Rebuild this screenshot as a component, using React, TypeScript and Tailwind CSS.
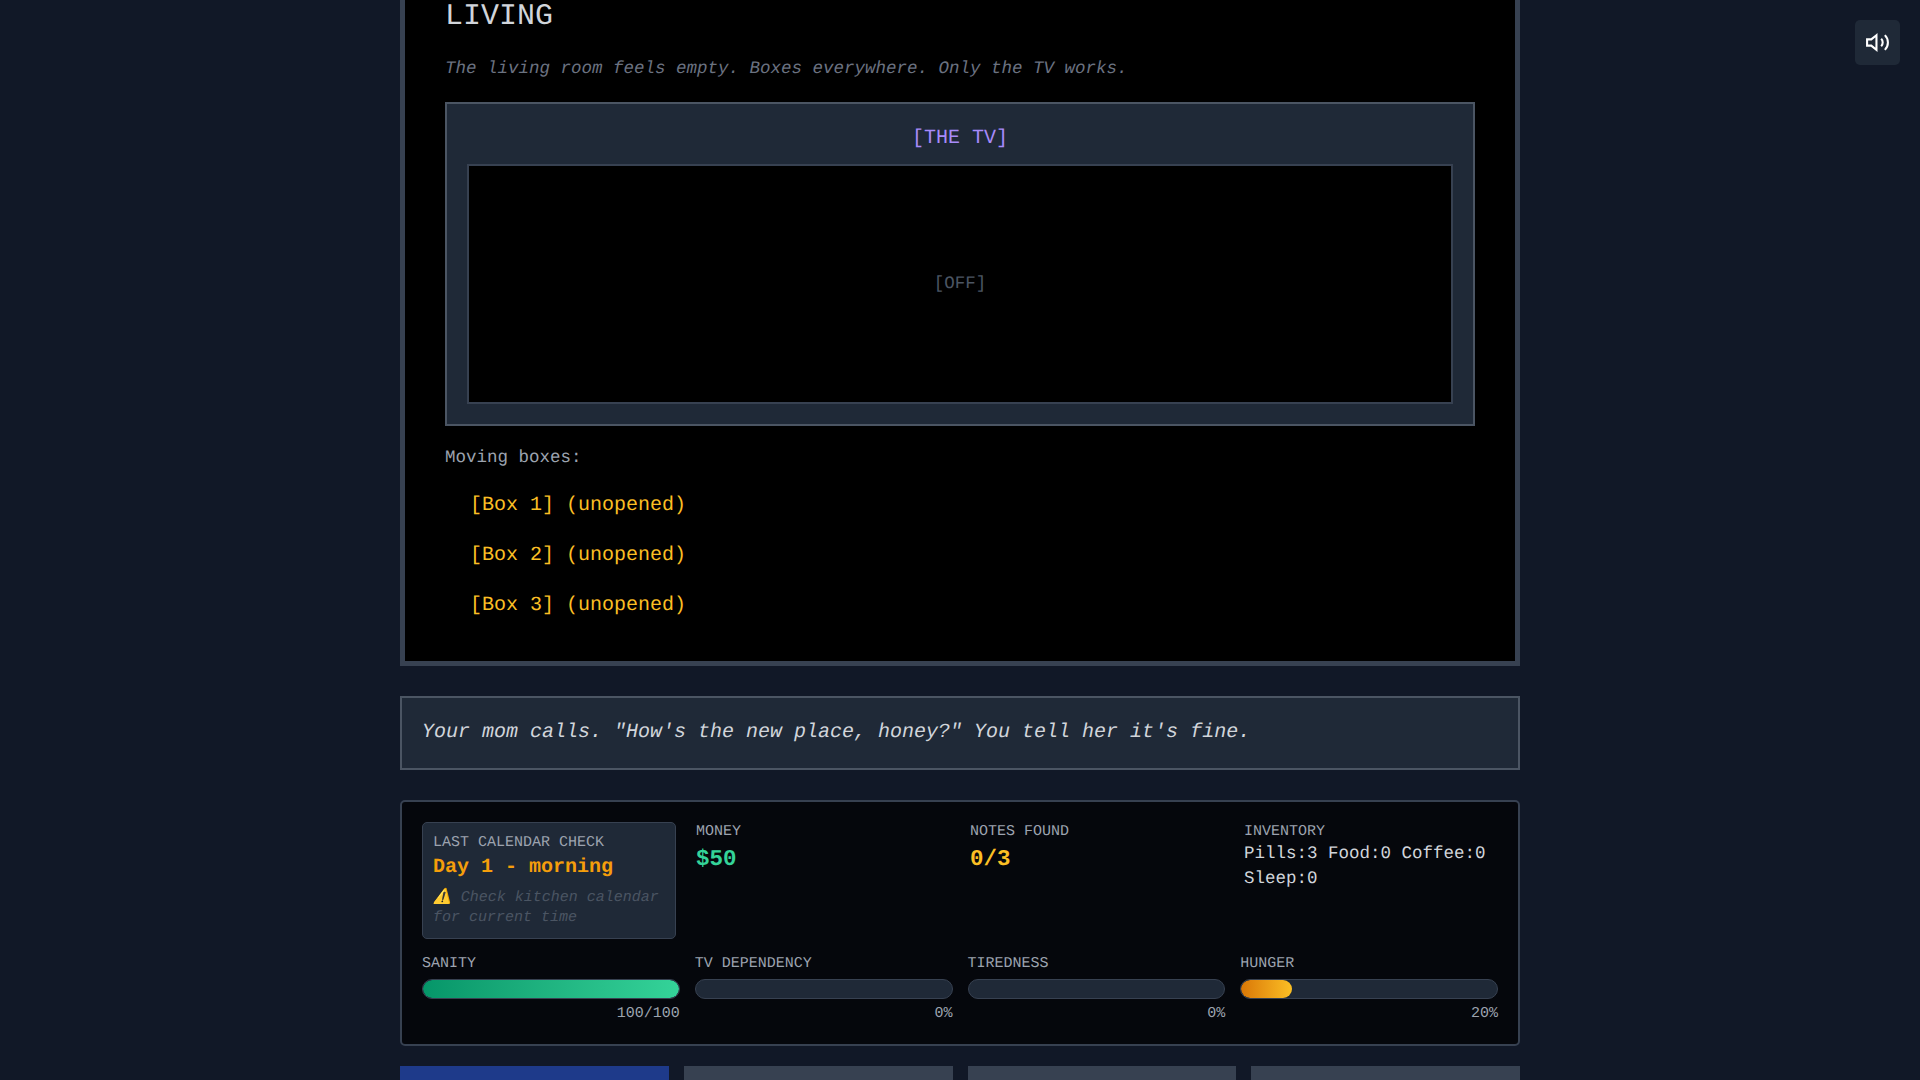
import { useState } from 'react';

interface Meter {
  label: string;
  percent: number;
  text: string;
  fill: string;
}

const meters: Meter[] = [
  { label: 'SANITY', percent: 100, text: '100/100', fill: 'from-[#059669] to-[#34d399]' },
  { label: 'TV DEPENDENCY', percent: 0, text: '0%', fill: 'from-[#7c3aed] to-[#a78bfa]' },
  { label: 'TIREDNESS', percent: 0, text: '0%', fill: 'from-[#2563eb] to-[#60a5fa]' },
  { label: 'HUNGER', percent: 20, text: '20%', fill: 'from-[#d97706] to-[#fbbf24]' },
];

const rooms = ['living', 'kitchen', 'bedroom', 'bathroom'];

function VolumeIcon() {
  return (
    <svg className="w-[25px] h-[25px]" viewBox="0 0 24 24" fill="none" stroke="currentColor" strokeWidth="2">
      <polygon points="11 5 6 9 2 9 2 15 6 15 11 19 11 5" />
      <path d="M15.54 8.46a5 5 0 0 1 0 7.07" />
      <path d="M19.07 4.93a10 10 0 0 1 0 14.14" />
    </svg>
  );
}

function MeterBar({ label, percent, text, fill }: Meter) {
  return (
    <div>
      <div className="text-[#9ca3af]">{label}</div>
      <div className="mt-[5px] h-5 rounded-full border border-[#374151] bg-[#1f2937] overflow-hidden">
        <div className={`h-full rounded-full bg-linear-to-r ${fill}`} style={{ width: `${percent}%` }} />
      </div>
      <div className="mt-[5px] text-right text-[#9ca3af]">{text}</div>
    </div>
  );
}

export default function App() {
  const [muted, setMuted] = useState(false);
  const [room, setRoom] = useState('living');

  return (
    <div className="h-screen overflow-hidden bg-[#111827] font-['Liberation_Mono',monospace] text-[#d1d5db] antialiased [text-rendering:geometricPrecision]">
      <button
        onClick={() => setMuted(!muted)}
        aria-label={muted ? 'Unmute' : 'Mute'}
        className="fixed top-5 right-5 p-2.5 rounded-[5px] bg-[#1f2937] text-white"
      >
        <VolumeIcon />
      </button>

      <main className="w-[1120px] mx-auto -mt-12">
        {/* Room */}
        <section className="border-5 border-[#374151] bg-black p-10">
          <h2 className="text-[30px] leading-10">LIVING</h2>
          <p className="mt-5 text-[17.5px] leading-[25px] italic text-[#6b7280]">
            The living room feels empty. Boxes everywhere. Only the TV works.
          </p>

          <div className="mt-5 border-2 border-[#4b5563] bg-[#1f2937] p-5">
            <div className="text-center text-xl leading-[30px] text-[#a78bfa]">[THE TV]</div>
            <div className="mt-2.5 h-60 border-2 border-[#374151] bg-black flex items-center justify-center text-[17.5px] leading-[25px] text-[#4b5563]">
              [OFF]
            </div>
          </div>

          <p className="mt-5 text-[17.5px] leading-[25px] text-[#9ca3af]">Moving boxes:</p>
          <div className="mt-5 ml-5 flex flex-col items-start gap-5">
            {[1, 2, 3].map((n) => (
              <button
                key={n}
                className="px-[5px] text-xl leading-[30px] text-[#fbbf24] [text-rendering:geometricPrecision]"
              >
                [Box {n}] (unopened)
              </button>
            ))}
          </div>
        </section>

        {/* Message */}
        <section className="mt-[30px] border-2 border-[#4b5563] bg-[#1f2937] p-5 text-xl leading-[30px] italic">
          Your mom calls. "How's the new place, honey?" You tell her it's fine.
        </section>

        {/* Stats */}
        <section className="mt-[30px] border-2 border-[#374151] rounded-[5px] bg-[#05070c] p-5 text-[15px] leading-5">
          <div className="grid grid-cols-4 gap-5">
            <div className="border border-[#374151] rounded-[5px] bg-[#1f2937] p-2.5">
              <div className="text-[#9ca3af]">LAST CALENDAR CHECK</div>
              <div className="text-xl leading-[30px] font-bold text-[#f59e0b]">Day 1 - morning</div>
              <div className="mt-[5px] italic text-[#4b5563]">⚠️ Check kitchen calendar for current time</div>
            </div>
            <div>
              <div className="text-[#9ca3af]">MONEY</div>
              <div className="text-[22.5px] leading-[35px] font-bold text-[#34d399]">$50</div>
            </div>
            <div>
              <div className="text-[#9ca3af]">NOTES FOUND</div>
              <div className="text-[22.5px] leading-[35px] font-bold text-[#fbbf24]">0/3</div>
            </div>
            <div>
              <div className="text-[#9ca3af]">INVENTORY</div>
              <div className="text-[17.5px] leading-[25px]">Pills:3 Food:0 Coffee:0 Sleep:0</div>
            </div>
          </div>

          <div className="mt-[15px] grid grid-cols-4 gap-[15px]">
            {meters.map((m) => (
              <MeterBar key={m.label} {...m} />
            ))}
          </div>
        </section>

        {/* Room navigation */}
        <nav className="mt-5 grid grid-cols-4 gap-[15px]">
          {rooms.map((r) => (
            <button
              key={r}
              onClick={() => setRoom(r)}
              aria-label={r}
              className={`h-[60px] ${r === room ? 'bg-[#1e3a8a]' : 'bg-[#374151]'}`}
            />
          ))}
        </nav>
      </main>
    </div>
  );
}
